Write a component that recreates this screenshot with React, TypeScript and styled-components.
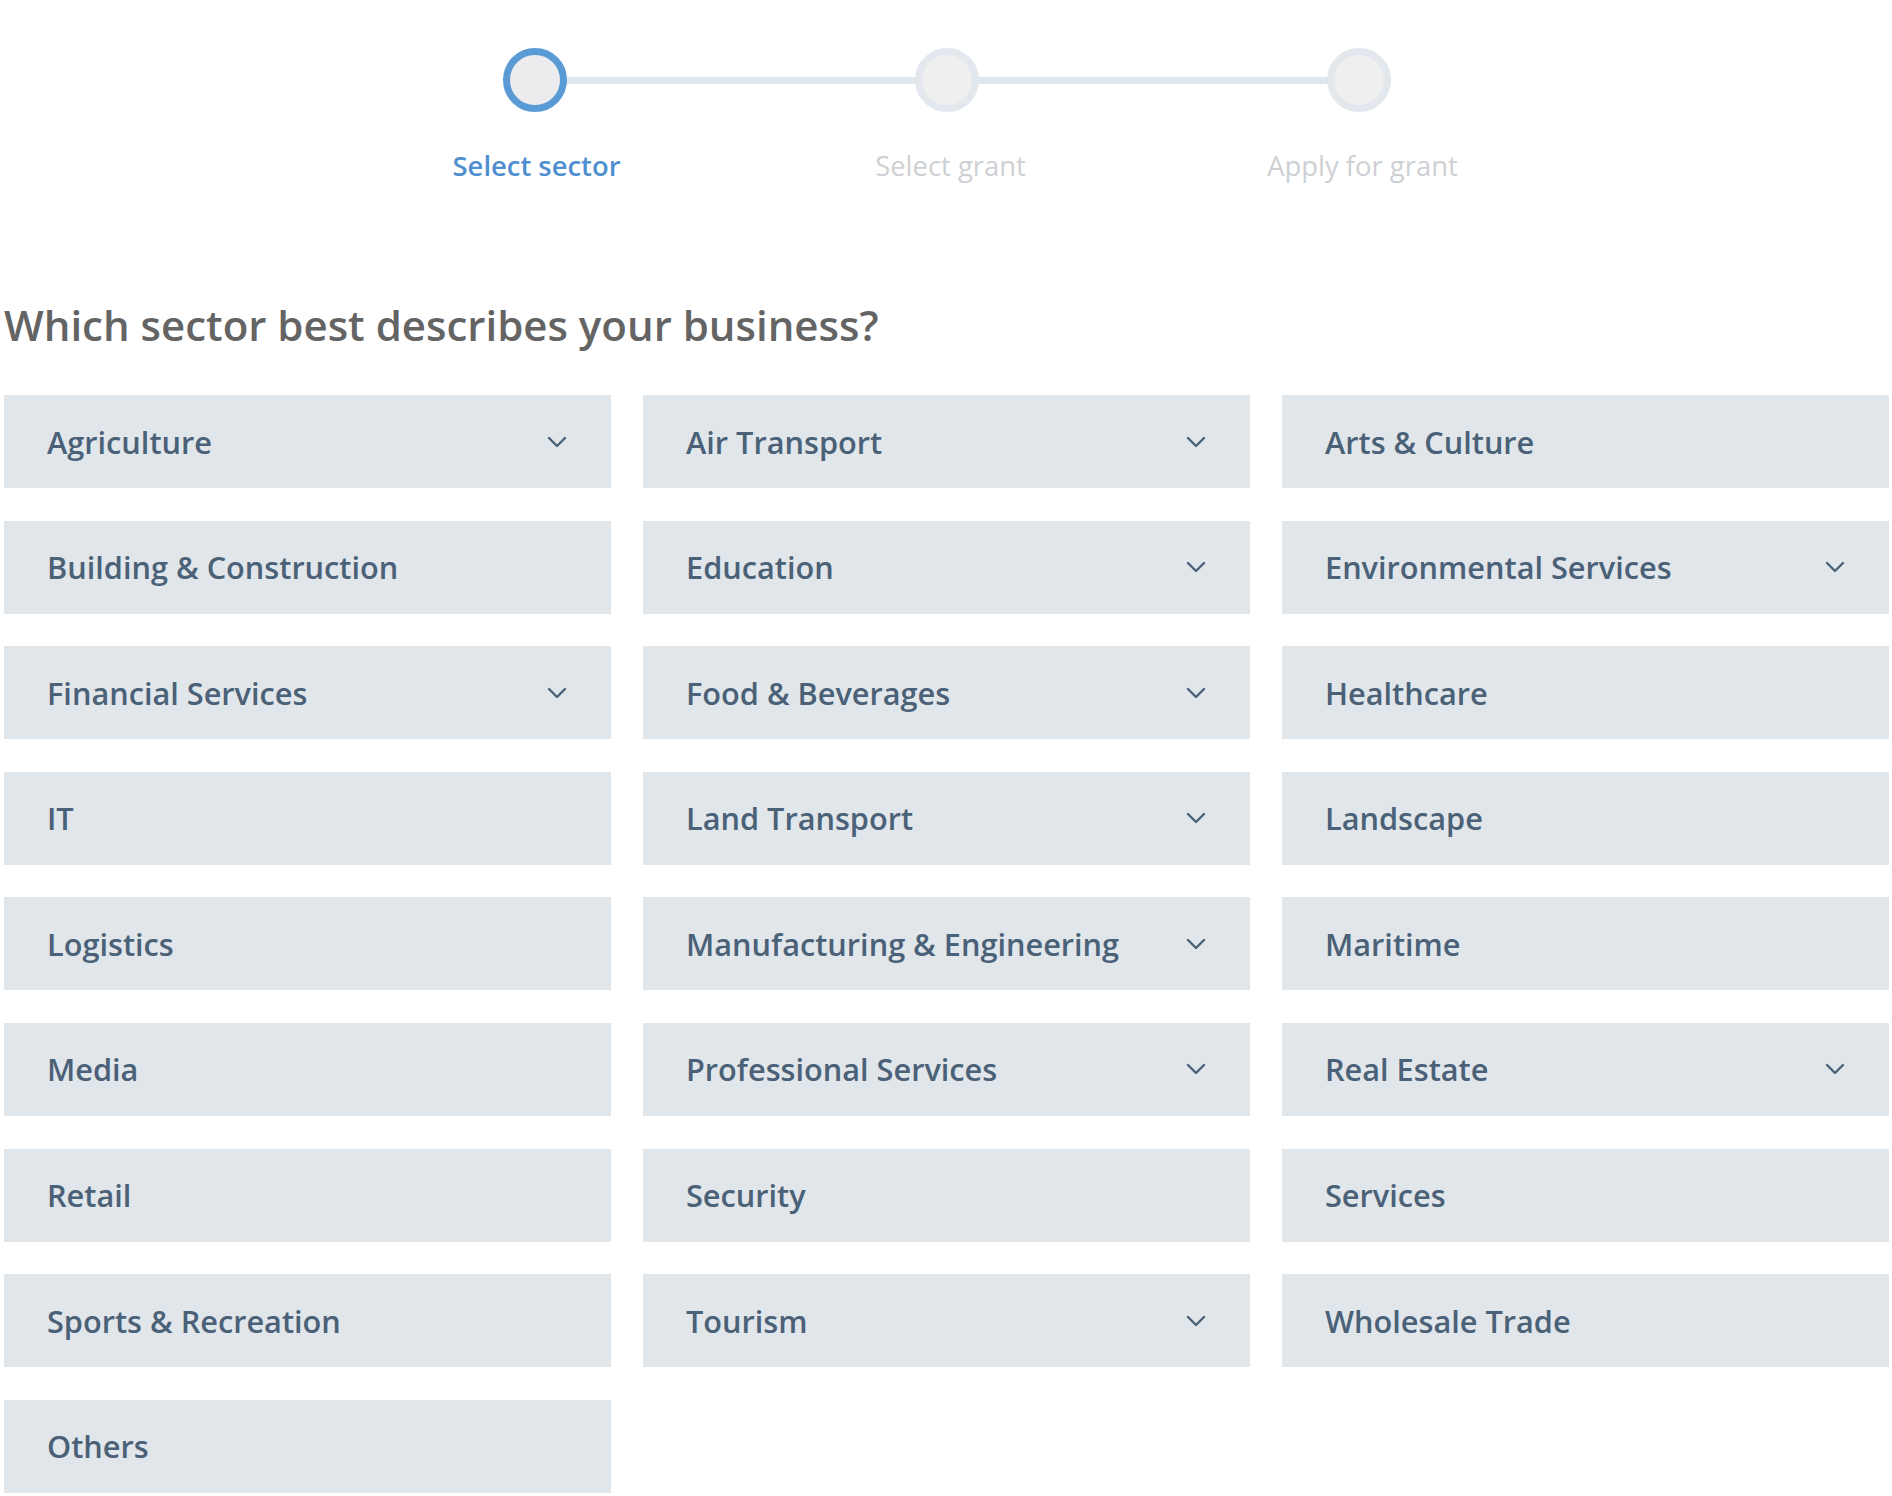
import {ReactElement} from "react";
import styled, {createGlobalStyle} from "styled-components";

const GlobalStyle = createGlobalStyle`
  html, body {
    margin: 0;
    padding: 0;
    background: #fff;
  }
  body {
    font-family: "Open Sans", "Liberation Sans", sans-serif;
  }
`;

const Page = styled.div`
  padding: 48px 3px 0 4px;
`;

const Stepper = styled.ol`
  list-style: none;
  margin: 0 auto;
  padding: 0;
  width: 1236px;
  display: flex;
`;

const Step = styled.li<{ $last?: boolean }>`
  flex: 1;
  position: relative;
  display: flex;
  flex-direction: column;
  align-items: center;

  &::before {
    content: "";
    display: ${p => p.$last ? "none" : "block"};
    position: absolute;
    top: 29px;
    left: 50%;
    width: 100%;
    height: 7px;
    background: #dfe7ed;
  }
`;

const Dot = styled.span<{ $active?: boolean }>`
  position: relative;
  z-index: 1;
  box-sizing: border-box;
  width: 64px;
  height: 64px;
  border-radius: 50%;
  border: 7px solid ${p => p.$active ? "#5b9bd5" : "#e2e8ed"};
  background: ${p => p.$active ? "#ececee" : "#efeff0"};
`;

const StepLabel = styled.span<{ $active?: boolean }>`
  margin-top: 36px;
  margin-left: ${p => p.$active ? "4px" : "8px"};
  font-size: 27.4px;
  line-height: 36px;
  font-weight: ${p => p.$active ? 600 : 400};
  color: ${p => p.$active ? "#4f8fcf" : "#cdd0d3"};
`;

const Heading = styled.h1`
  margin: 116px 0 45px;
  font-size: 42px;
  line-height: 50px;
  font-weight: 600;
  color: #646464;
`;

const Grid = styled.div`
  display: grid;
  grid-template-columns: repeat(3, 607px);
  column-gap: 32px;
  row-gap: 32.6px;
`;

const Sector = styled.button`
  height: 93px;
  box-sizing: border-box;
  display: flex;
  align-items: center;
  justify-content: space-between;
  padding: 0 44px 0 43px;
  border: 0;
  border-radius: 0;
  background: #e1e6ea;
  font-family: inherit;
  font-size: 30.7px;
  font-weight: 600;
  color: #4a6177;
  text-align: left;
  cursor: pointer;
`;

const Chevron = () => (
    <svg width="20" height="12" viewBox="0 0 20 12" fill="none">
        <path d="M2 2 L10 10 L18 2" stroke="#4a6177" strokeWidth="2.4" strokeLinecap="round" strokeLinejoin="round"/>
    </svg>
);

const steps = ["Select sector", "Select grant", "Apply for grant"];

const sectors: [string, boolean][] = [
    ["Agriculture", true], ["Air Transport", true], ["Arts & Culture", false],
    ["Building & Construction", false], ["Education", true], ["Environmental Services", true],
    ["Financial Services", true], ["Food & Beverages", true], ["Healthcare", false],
    ["IT", false], ["Land Transport", true], ["Landscape", false],
    ["Logistics", false], ["Manufacturing & Engineering", true], ["Maritime", false],
    ["Media", false], ["Professional Services", true], ["Real Estate", true],
    ["Retail", false], ["Security", false], ["Services", false],
    ["Sports & Recreation", false], ["Tourism", true], ["Wholesale Trade", false],
    ["Others", false],
];

export default function App(): ReactElement {
    return (
        <Page>
            <GlobalStyle/>
            <Stepper>
                {steps.map((s, i) => (
                    <Step key={s} $last={i === steps.length - 1}>
                        <Dot $active={i === 0}/>
                        <StepLabel $active={i === 0}>{s}</StepLabel>
                    </Step>
                ))}
            </Stepper>
            <Heading>Which sector best describes your business?</Heading>
            <Grid>
                {sectors.map(([name, sub]) => (
                    <Sector key={name} type="button">
                        <span>{name}</span>
                        {sub && <Chevron/>}
                    </Sector>
                ))}
            </Grid>
        </Page>
    );
}
